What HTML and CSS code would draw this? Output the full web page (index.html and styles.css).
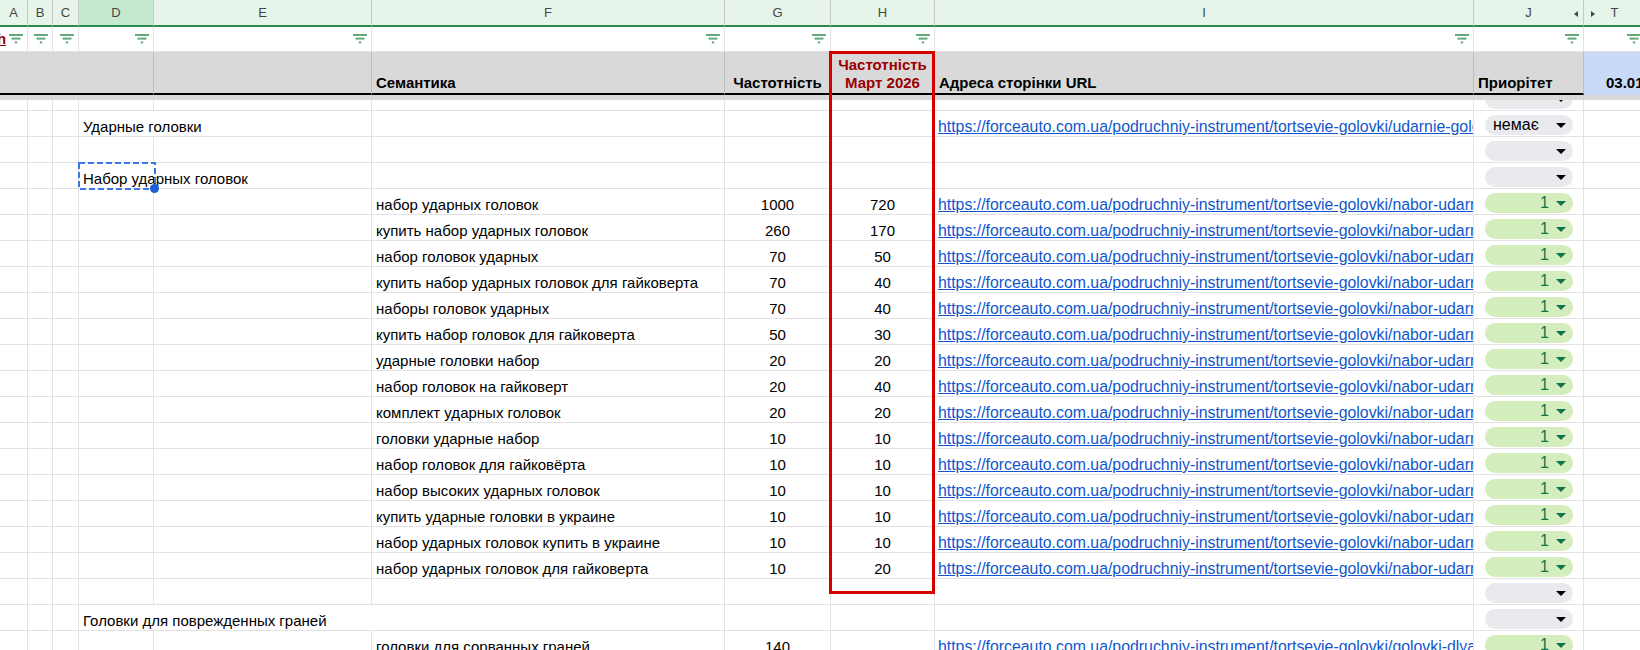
FILE: index.html
```html
<!DOCTYPE html>
<html lang="uk">
<head>
<meta charset="utf-8">
<title>Семантика</title>
<link rel="stylesheet" href="styles.css">
</head>
<body>
<div class="sheet">
  <div class="row letters">
    <div class="lc">A</div>
    <div class="lc">B</div>
    <div class="lc">C</div>
    <div class="lc sel">D</div>
    <div class="lc">E</div>
    <div class="lc">F</div>
    <div class="lc">G</div>
    <div class="lc">H</div>
    <div class="lc">I</div>
    <div class="lc hid-r">J<i class="tri-l"></i></div>
    <div class="lc hid-l"><i class="tri-r"></i>T</div>
  </div>

  <div class="row filters">
    <div class="fc"><span class="cut">h</span><svg class="fi" viewBox="0 0 14 10" width="14" height="10"><rect x="0" y="0" width="14" height="2"/><rect x="2.5" y="3.6" width="9" height="2"/><rect x="5.8" y="7.4" width="2.4" height="2"/></svg></div>
    <div class="fc"><svg class="fi" viewBox="0 0 14 10" width="14" height="10"><rect x="0" y="0" width="14" height="2"/><rect x="2.5" y="3.6" width="9" height="2"/><rect x="5.8" y="7.4" width="2.4" height="2"/></svg></div>
    <div class="fc"><svg class="fi" viewBox="0 0 14 10" width="14" height="10"><rect x="0" y="0" width="14" height="2"/><rect x="2.5" y="3.6" width="9" height="2"/><rect x="5.8" y="7.4" width="2.4" height="2"/></svg></div>
    <div class="fc"><svg class="fi" viewBox="0 0 14 10" width="14" height="10"><rect x="0" y="0" width="14" height="2"/><rect x="2.5" y="3.6" width="9" height="2"/><rect x="5.8" y="7.4" width="2.4" height="2"/></svg></div>
    <div class="fc"><svg class="fi" viewBox="0 0 14 10" width="14" height="10"><rect x="0" y="0" width="14" height="2"/><rect x="2.5" y="3.6" width="9" height="2"/><rect x="5.8" y="7.4" width="2.4" height="2"/></svg></div>
    <div class="fc"><svg class="fi" viewBox="0 0 14 10" width="14" height="10"><rect x="0" y="0" width="14" height="2"/><rect x="2.5" y="3.6" width="9" height="2"/><rect x="5.8" y="7.4" width="2.4" height="2"/></svg></div>
    <div class="fc"><svg class="fi" viewBox="0 0 14 10" width="14" height="10"><rect x="0" y="0" width="14" height="2"/><rect x="2.5" y="3.6" width="9" height="2"/><rect x="5.8" y="7.4" width="2.4" height="2"/></svg></div>
    <div class="fc"><svg class="fi" viewBox="0 0 14 10" width="14" height="10"><rect x="0" y="0" width="14" height="2"/><rect x="2.5" y="3.6" width="9" height="2"/><rect x="5.8" y="7.4" width="2.4" height="2"/></svg></div>
    <div class="fc"><svg class="fi" viewBox="0 0 14 10" width="14" height="10"><rect x="0" y="0" width="14" height="2"/><rect x="2.5" y="3.6" width="9" height="2"/><rect x="5.8" y="7.4" width="2.4" height="2"/></svg></div>
    <div class="fc"><svg class="fi" viewBox="0 0 14 10" width="14" height="10"><rect x="0" y="0" width="14" height="2"/><rect x="2.5" y="3.6" width="9" height="2"/><rect x="5.8" y="7.4" width="2.4" height="2"/></svg></div>
    <div class="fc"><svg class="fi" viewBox="0 0 14 10" width="14" height="10"><rect x="0" y="0" width="14" height="2"/><rect x="2.5" y="3.6" width="9" height="2"/><rect x="5.8" y="7.4" width="2.4" height="2"/></svg></div>
  </div>

  <div class="row head">
    <div class="hc span4"></div>
    <div class="hc"></div>
    <div class="hc">Семантика</div>
    <div class="hc mid">Частотність</div>
    <div class="hc mid red">Частотність<br>Март 2026</div>
    <div class="hc">Адреса сторінки URL</div>
    <div class="hc">Приорітет</div>
    <div class="hc date">03.01</div>
  </div>

  <div class="freeze"></div>

  <div class="row body partial">
    <div class="c"></div><div class="c"></div><div class="c"></div><div class="c"></div><div class="c"></div><div class="c"></div><div class="c"></div><div class="c"></div><div class="c"></div>
    <div class="c pick"><span class="chip none"><i class="arr"></i></span></div>
    <div class="c"></div>
  </div>

  <div class="row body">
    <div class="c"></div><div class="c"></div><div class="c"></div>
    <div class="c span2">Ударные головки</div>
    <div class="c"></div><div class="c"></div><div class="c"></div>
    <div class="c url"><a href="#">https://forceauto.com.ua/podruchniy-instrument/tortsevie-golovki/udarnie-golovki/</a></div>
    <div class="c pick"><span class="chip none txt"><span class="v">немає</span><i class="arr"></i></span></div>
    <div class="c"></div>
  </div>

  <div class="row body">
    <div class="c"></div><div class="c"></div><div class="c"></div><div class="c"></div><div class="c"></div><div class="c"></div><div class="c"></div><div class="c"></div><div class="c"></div>
    <div class="c pick"><span class="chip none"><i class="arr"></i></span></div>
    <div class="c"></div>
  </div>

  <div class="row body">
    <div class="c"></div><div class="c"></div><div class="c"></div>
    <div class="c span2 active">Набор ударных головок<span class="marquee"><svg class="mq" width="78" height="28" viewBox="0 0 78 28"><rect x="1" y="1" width="76" height="26" fill="none" stroke="#3b78e7" stroke-width="2" stroke-dasharray="6 3"/></svg><span class="handle"></span></span></div>
    <div class="c"></div><div class="c"></div><div class="c"></div><div class="c"></div>
    <div class="c pick"><span class="chip none"><i class="arr"></i></span></div>
    <div class="c"></div>
  </div>

  <div class="row body">
    <div class="c"></div><div class="c"></div><div class="c"></div><div class="c"></div><div class="c"></div>
    <div class="c">набор ударных головок</div><div class="c num">1000</div><div class="c num">720</div>
    <div class="c url"><a href="#">https://forceauto.com.ua/podruchniy-instrument/tortsevie-golovki/nabor-udarnyh-golovok/</a></div>
    <div class="c pick"><span class="chip ok"><span class="v">1</span><i class="arr"></i></span></div><div class="c"></div>
  </div>
  <div class="row body">
    <div class="c"></div><div class="c"></div><div class="c"></div><div class="c"></div><div class="c"></div>
    <div class="c">купить набор ударных головок</div><div class="c num">260</div><div class="c num">170</div>
    <div class="c url"><a href="#">https://forceauto.com.ua/podruchniy-instrument/tortsevie-golovki/nabor-udarnyh-golovok/</a></div>
    <div class="c pick"><span class="chip ok"><span class="v">1</span><i class="arr"></i></span></div><div class="c"></div>
  </div>
  <div class="row body">
    <div class="c"></div><div class="c"></div><div class="c"></div><div class="c"></div><div class="c"></div>
    <div class="c">набор головок ударных</div><div class="c num">70</div><div class="c num">50</div>
    <div class="c url"><a href="#">https://forceauto.com.ua/podruchniy-instrument/tortsevie-golovki/nabor-udarnyh-golovok/</a></div>
    <div class="c pick"><span class="chip ok"><span class="v">1</span><i class="arr"></i></span></div><div class="c"></div>
  </div>
  <div class="row body">
    <div class="c"></div><div class="c"></div><div class="c"></div><div class="c"></div><div class="c"></div>
    <div class="c">купить набор ударных головок для гайковерта</div><div class="c num">70</div><div class="c num">40</div>
    <div class="c url"><a href="#">https://forceauto.com.ua/podruchniy-instrument/tortsevie-golovki/nabor-udarnyh-golovok/</a></div>
    <div class="c pick"><span class="chip ok"><span class="v">1</span><i class="arr"></i></span></div><div class="c"></div>
  </div>
  <div class="row body">
    <div class="c"></div><div class="c"></div><div class="c"></div><div class="c"></div><div class="c"></div>
    <div class="c">наборы головок ударных</div><div class="c num">70</div><div class="c num">40</div>
    <div class="c url"><a href="#">https://forceauto.com.ua/podruchniy-instrument/tortsevie-golovki/nabor-udarnyh-golovok/</a></div>
    <div class="c pick"><span class="chip ok"><span class="v">1</span><i class="arr"></i></span></div><div class="c"></div>
  </div>
  <div class="row body">
    <div class="c"></div><div class="c"></div><div class="c"></div><div class="c"></div><div class="c"></div>
    <div class="c">купить набор головок для гайковерта</div><div class="c num">50</div><div class="c num">30</div>
    <div class="c url"><a href="#">https://forceauto.com.ua/podruchniy-instrument/tortsevie-golovki/nabor-udarnyh-golovok/</a></div>
    <div class="c pick"><span class="chip ok"><span class="v">1</span><i class="arr"></i></span></div><div class="c"></div>
  </div>
  <div class="row body">
    <div class="c"></div><div class="c"></div><div class="c"></div><div class="c"></div><div class="c"></div>
    <div class="c">ударные головки набор</div><div class="c num">20</div><div class="c num">20</div>
    <div class="c url"><a href="#">https://forceauto.com.ua/podruchniy-instrument/tortsevie-golovki/nabor-udarnyh-golovok/</a></div>
    <div class="c pick"><span class="chip ok"><span class="v">1</span><i class="arr"></i></span></div><div class="c"></div>
  </div>
  <div class="row body">
    <div class="c"></div><div class="c"></div><div class="c"></div><div class="c"></div><div class="c"></div>
    <div class="c">набор головок на гайковерт</div><div class="c num">20</div><div class="c num">40</div>
    <div class="c url"><a href="#">https://forceauto.com.ua/podruchniy-instrument/tortsevie-golovki/nabor-udarnyh-golovok/</a></div>
    <div class="c pick"><span class="chip ok"><span class="v">1</span><i class="arr"></i></span></div><div class="c"></div>
  </div>
  <div class="row body">
    <div class="c"></div><div class="c"></div><div class="c"></div><div class="c"></div><div class="c"></div>
    <div class="c">комплект ударных головок</div><div class="c num">20</div><div class="c num">20</div>
    <div class="c url"><a href="#">https://forceauto.com.ua/podruchniy-instrument/tortsevie-golovki/nabor-udarnyh-golovok/</a></div>
    <div class="c pick"><span class="chip ok"><span class="v">1</span><i class="arr"></i></span></div><div class="c"></div>
  </div>
  <div class="row body">
    <div class="c"></div><div class="c"></div><div class="c"></div><div class="c"></div><div class="c"></div>
    <div class="c">головки ударные набор</div><div class="c num">10</div><div class="c num">10</div>
    <div class="c url"><a href="#">https://forceauto.com.ua/podruchniy-instrument/tortsevie-golovki/nabor-udarnyh-golovok/</a></div>
    <div class="c pick"><span class="chip ok"><span class="v">1</span><i class="arr"></i></span></div><div class="c"></div>
  </div>
  <div class="row body">
    <div class="c"></div><div class="c"></div><div class="c"></div><div class="c"></div><div class="c"></div>
    <div class="c">набор головок для гайковёрта</div><div class="c num">10</div><div class="c num">10</div>
    <div class="c url"><a href="#">https://forceauto.com.ua/podruchniy-instrument/tortsevie-golovki/nabor-udarnyh-golovok/</a></div>
    <div class="c pick"><span class="chip ok"><span class="v">1</span><i class="arr"></i></span></div><div class="c"></div>
  </div>
  <div class="row body">
    <div class="c"></div><div class="c"></div><div class="c"></div><div class="c"></div><div class="c"></div>
    <div class="c">набор высоких ударных головок</div><div class="c num">10</div><div class="c num">10</div>
    <div class="c url"><a href="#">https://forceauto.com.ua/podruchniy-instrument/tortsevie-golovki/nabor-udarnyh-golovok/</a></div>
    <div class="c pick"><span class="chip ok"><span class="v">1</span><i class="arr"></i></span></div><div class="c"></div>
  </div>
  <div class="row body">
    <div class="c"></div><div class="c"></div><div class="c"></div><div class="c"></div><div class="c"></div>
    <div class="c">купить ударные головки в украине</div><div class="c num">10</div><div class="c num">10</div>
    <div class="c url"><a href="#">https://forceauto.com.ua/podruchniy-instrument/tortsevie-golovki/nabor-udarnyh-golovok/</a></div>
    <div class="c pick"><span class="chip ok"><span class="v">1</span><i class="arr"></i></span></div><div class="c"></div>
  </div>
  <div class="row body">
    <div class="c"></div><div class="c"></div><div class="c"></div><div class="c"></div><div class="c"></div>
    <div class="c">набор ударных головок купить в украине</div><div class="c num">10</div><div class="c num">10</div>
    <div class="c url"><a href="#">https://forceauto.com.ua/podruchniy-instrument/tortsevie-golovki/nabor-udarnyh-golovok/</a></div>
    <div class="c pick"><span class="chip ok"><span class="v">1</span><i class="arr"></i></span></div><div class="c"></div>
  </div>
  <div class="row body">
    <div class="c"></div><div class="c"></div><div class="c"></div><div class="c"></div><div class="c"></div>
    <div class="c">набор ударных головок для гайковерта</div><div class="c num">10</div><div class="c num">20</div>
    <div class="c url"><a href="#">https://forceauto.com.ua/podruchniy-instrument/tortsevie-golovki/nabor-udarnyh-golovok/</a></div>
    <div class="c pick"><span class="chip ok"><span class="v">1</span><i class="arr"></i></span></div><div class="c"></div>
  </div>

  <div class="row body">
    <div class="c"></div><div class="c"></div><div class="c"></div><div class="c"></div><div class="c"></div><div class="c"></div><div class="c"></div><div class="c"></div><div class="c"></div>
    <div class="c pick"><span class="chip none"><i class="arr"></i></span></div>
    <div class="c"></div>
  </div>

  <div class="row body">
    <div class="c"></div><div class="c"></div><div class="c"></div>
    <div class="c span3">Головки для поврежденных граней</div>
    <div class="c"></div><div class="c"></div><div class="c"></div>
    <div class="c pick"><span class="chip none"><i class="arr"></i></span></div>
    <div class="c"></div>
  </div>

  <div class="row body">
    <div class="c"></div><div class="c"></div><div class="c"></div><div class="c"></div><div class="c"></div>
    <div class="c">головки для сорванных граней</div><div class="c num">140</div><div class="c num"></div>
    <div class="c url"><a href="#">https://forceauto.com.ua/podruchniy-instrument/tortsevie-golovki/golovki-dlya-sorvannyh-graney/</a></div>
    <div class="c pick"><span class="chip ok"><span class="v">1</span><i class="arr"></i></span></div><div class="c"></div>
  </div>

  <div class="redbox"></div>
</div>
</body>
</html>
```

FILE: styles.css
```css
html, body {
  margin: 0;
  padding: 0;
  background: #ffffff;
}
body {
  width: 1640px;
  height: 650px;
  overflow: hidden;
  font-family: "Liberation Sans", Arial, sans-serif;
  font-size: 15px;
  color: #000;
}
.sheet {
  position: relative;
  width: 1646px;
}
.row {
  display: grid;
  grid-template-columns: 28px 25px 26px 75px 218px 353px 106px 104px 539px 110px 62px;
}

/* column letters */
.letters { height: 27px; }
.lc {
  box-sizing: border-box;
  position: relative;
  background: #e6f4ea;
  border-right: 1px solid #c7cbc8;
  border-bottom: 2px solid #2b8a4c;
  display: flex;
  align-items: center;
  justify-content: center;
  font-size: 13px;
  color: #444746;
}
.lc.sel { background: #c4e9d0; }
.tri-l {
  position: absolute;
  right: 5px;
  top: 11px;
  width: 0; height: 0;
  border-top: 3px solid transparent;
  border-bottom: 3px solid transparent;
  border-right: 4px solid #444746;
}
.tri-r {
  position: absolute;
  left: 7px;
  top: 11px;
  width: 0; height: 0;
  border-top: 3px solid transparent;
  border-bottom: 3px solid transparent;
  border-left: 4px solid #444746;
}

/* filter row */
.filters { height: 25px; }
.fc {
  box-sizing: border-box;
  border-right: 1px solid #e2e2e2;
  border-bottom: 1px solid #e2e2e2;
  display: flex;
  align-items: center;
  justify-content: flex-end;
  padding-right: 4px;
  overflow: hidden;
}
.fc:first-child { justify-content: space-between; }
.fi { fill: #63a97a; flex: none; }
.cut {
  margin-left: -3px;
  color: #990000;
  font-weight: bold;
  text-decoration: underline;
  font-size: 15px;
  line-height: 18px;
}

/* header row */
.head { height: 43px; }
.hc {
  box-sizing: border-box;
  background: #d9d9d9;
  border-right: 1px solid #bdbdbd;
  border-bottom: 2px solid #000;
  display: flex;
  align-items: flex-end;
  padding: 0 4px 1px;
  font-weight: bold;
  line-height: 18px;
  white-space: nowrap;
  overflow: hidden;
}
.hc.span4 { grid-column: span 4; }
.hc.mid { justify-content: center; text-align: center; }
.hc.red { color: #990000; }
.hc.date {
  background: #c9daf8;
  border-bottom-color: #c9daf8;
  padding-left: 22px;
}

.freeze {
  height: 5px;
  background: #d9d9d9;
}

/* body */
.body { height: 26px; }
.body.partial { height: 11px; overflow: hidden; }
.c {
  box-sizing: border-box;
  border-right: 1px solid #e2e2e2;
  border-bottom: 1px solid #e2e2e2;
  display: flex;
  align-items: flex-end;
  padding: 0 4px;
  line-height: 18px;
  white-space: nowrap;
  overflow: hidden;
  min-width: 0;
}
.c.span2 { grid-column: span 2; position: relative; overflow: visible; }
.c.span3 { grid-column: span 3; }
.c.num { justify-content: center; }
.c.url { padding-left: 3px; }
.c.url a {
  color: #1155cc;
  text-decoration: underline;
  font-size: 15.85px;
}
.c.pick { padding: 0 0 1px 11px; }

.chip {
  box-sizing: border-box;
  width: 88px;
  height: 20px;
  flex: none;
  border-radius: 10px;
  display: flex;
  align-items: center;
  justify-content: flex-end;
  gap: 7px;
  padding: 0 7px 0 8px;
  line-height: 20px;
  font-size: 16px;
}
.chip.none { background: #e8eaed; color: #000; }
.chip.none.txt { justify-content: space-between; }
.chip.ok { background: #d4edbc; color: #11734b; }
.arr {
  width: 0; height: 0;
  border-left: 5px solid transparent;
  border-right: 5px solid transparent;
  border-top: 5px solid currentColor;
  flex: none;
}

/* copy marquee on D */
.marquee {
  position: absolute;
  left: -1px;
  top: -1px;
  width: 78px;
  height: 28px;
}
.mq { display: block; }
.handle {
  position: absolute;
  left: 72px;
  top: 22px;
  width: 9px;
  height: 9px;
  border-radius: 50%;
  background: #1a5fd6;
}

/* annotation */
.redbox {
  position: absolute;
  left: 829px;
  top: 51px;
  width: 106px;
  height: 543px;
  box-sizing: border-box;
  border: 3px solid #d40000;
}
```
